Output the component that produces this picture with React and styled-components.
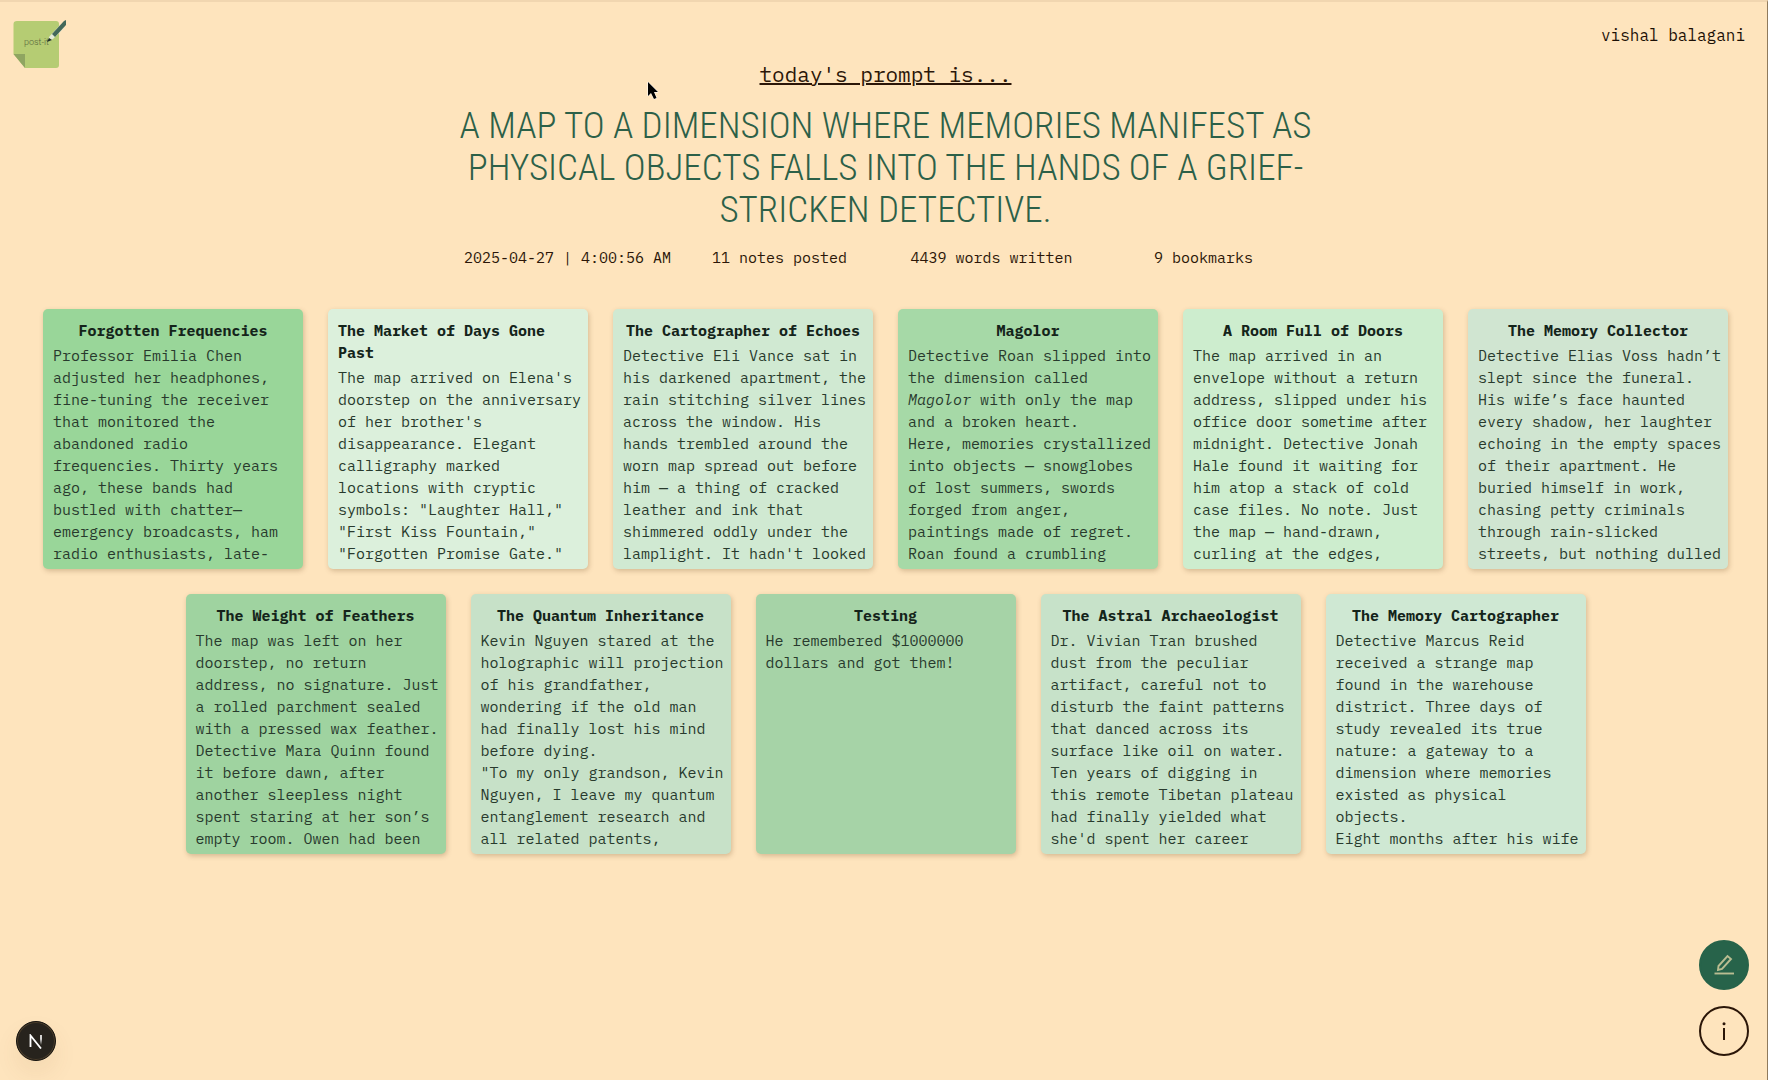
import React from "react";
import styled, { createGlobalStyle } from "styled-components";

const mono = '"IBM Plex Mono", "Liberation Mono", monospace';

const GlobalStyle = createGlobalStyle`
  * { box-sizing: border-box; }
  body { margin: 0; background: #fee4bd; font-family: ${mono}; color: #2b1608; }
  h1, h2, p, ul { margin: 0; padding: 0; font-weight: inherit; }
`;

const Page = styled.div`
  min-height: 100vh;
  padding: 0 0 24px 4px;
  border-top: 2px solid #f1d6b0;
  border-right: 1px solid #8f7a5c;
`;

const TopBar = styled.header`
  display: flex;
  justify-content: space-between;
  align-items: flex-start;
  height: 59px;
  padding: 16px 22px 0 9px;
`;

const LogoLink = styled.a`
  display: block;
  height: 50px;
`;

const UserLink = styled.a`
  font-size: 16px;
  line-height: 34px;
  color: #1c1006;
  text-decoration: none;
`;

const Prompt = styled.section`
  display: flex;
  flex-direction: column;
  align-items: center;
  padding: 0 16px;
`;

const Label = styled.p`
  font-size: 21px;
  line-height: 26px;
  text-decoration: underline;
  text-decoration-thickness: 2px;
`;

const Heading = styled.h1`
  max-width: 880px;
  margin-top: 18px;
  font-family: "Roboto Condensed", Roboto, sans-serif;
  font-size: 37px;
  font-weight: 300;
  line-height: 42px;
  color: #2c6048;
  text-align: center;
  text-transform: uppercase;
`;

const Stats = styled.ul`
  display: grid;
  grid-template-columns: repeat(4, 1fr);
  width: 100%;
  max-width: 848px;
  margin-top: 16px;
  list-style: none;
  text-align: center;
  white-space: nowrap;
  font-size: 15px;
  line-height: 22px;
`;

const Board = styled.main`
  display: flex;
  flex-wrap: wrap;
  justify-content: center;
  gap: 25px;
  padding: 40px 24px 0;
`;

const Note = styled.article`
  display: flex;
  flex-direction: column;
  gap: 3px;
  width: 260px;
  height: 260px;
  padding: 11px 0 4px;
  border-radius: 5px;
  background: ${(p) => p.$tone};
  box-shadow: 1px 2px 5px rgba(90, 60, 20, 0.25);
  font-size: 15px;
  line-height: 22px;
`;

const NoteTitle = styled.h2`
  display: flex;
  flex: none;
  justify-content: center;
  padding: 0 10px;
  font-size: 15px;
  font-weight: 700;
  color: #14241a;
`;

const NoteBody = styled.p`
  flex: 1;
  min-height: 0;
  padding: 0 6px 0 10px;
  overflow: hidden;
  white-space: pre-line;
  color: #283a2d;
`;

const Actions = styled.nav`
  position: fixed;
  right: 19px;
  bottom: 24px;
  display: flex;
  flex-direction: column;
  gap: 16px;
`;

const RoundButton = styled.button`
  display: grid;
  place-items: center;
  width: 50px;
  height: 50px;
  padding: 0;
  border: 2px solid ${(p) => (p.$filled ? "#27634a" : "#2b1608")};
  border-radius: 50%;
  background: ${(p) => (p.$filled ? "#27634a" : "transparent")};
  color: ${(p) => (p.$filled ? "#b9bd91" : "#2b1608")};
`;

const DevButton = styled.button`
  position: fixed;
  left: 16px;
  bottom: 19px;
  display: grid;
  place-items: center;
  width: 40px;
  height: 40px;
  padding: 0;
  border: 1px solid #15120e;
  border-radius: 50%;
  background: #27231d;
  box-shadow: inset 0 0 0 1px #4d3f2c, 0 12px 24px rgba(120, 80, 20, 0.08);
`;

const Pointer = styled.svg`
  position: absolute;
  left: 646px;
  top: 80px;
`;

const notes = [
  { tone: "#99d699", title: "Forgotten Frequencies", body: "Professor Emilia Chen adjusted her headphones, fine-tuning the receiver that monitored the abandoned radio frequencies. Thirty years ago, these bands had bustled with chatter—emergency broadcasts, ham radio enthusiasts, late-" },
  { tone: "#dcf0dc", title: "The Market of Days Gone Past", body: "The map arrived on Elena's doorstep on the anniversary of her brother's disappearance. Elegant calligraphy marked locations with cryptic symbols: \"Laughter Hall,\" \"First Kiss Fountain,\" \"Forgotten Promise Gate.\"" },
  { tone: "#d0e9d2", title: "The Cartographer of Echoes", body: "Detective Eli Vance sat in his darkened apartment, the rain stitching silver lines across the window. His hands trembled around the worn map spread out before him — a thing of cracked leather and ink that shimmered oddly under the lamplight. It hadn't looked" },
  { tone: "#a6d9a7", title: "Magolor", body: <>Detective Roan slipped into the dimension called <em>Magolor</em> with only the map and a broken heart.{"\n"}Here, memories crystallized into objects — snowglobes of lost summers, swords forged from anger, paintings made of regret.{"\n"}Roan found a crumbling</> },
  { tone: "#cdedce", title: "A Room Full of Doors", body: "The map arrived in an envelope without a return address, slipped under his office door sometime after midnight. Detective Jonah Hale found it waiting for him atop a stack of cold case files. No note. Just the map — hand-drawn, curling at the edges," },
  { tone: "#d0e5d1", title: "The Memory Collector", body: "Detective Elias Voss hadn’t slept since the funeral. His wife’s face haunted every shadow, her laughter echoing in the empty spaces of their apartment. He buried himself in work, chasing petty criminals through rain-slicked streets, but nothing dulled" },
  { tone: "#9fd3a0", title: "The Weight of Feathers", body: "The map was left on her doorstep, no return address, no signature. Just a rolled parchment sealed with a pressed wax feather.\nDetective Mara Quinn found it before dawn, after another sleepless night spent staring at her son’s empty room. Owen had been" },
  { tone: "#c7e1c8", title: "The Quantum Inheritance", body: "Kevin Nguyen stared at the holographic will projection of his grandfather, wondering if the old man had finally lost his mind before dying.\n\"To my only grandson, Kevin Nguyen, I leave my quantum entanglement research and all related patents," },
  { tone: "#a6d3a7", title: "Testing", body: "He remembered $1000000 dollars and got them!" },
  { tone: "#c7e2c9", title: "The Astral Archaeologist", body: "Dr. Vivian Tran brushed dust from the peculiar artifact, careful not to disturb the faint patterns that danced across its surface like oil on water. Ten years of digging in this remote Tibetan plateau had finally yielded what she'd spent her career" },
  { tone: "#cfe8d3", title: "The Memory Cartographer", body: "Detective Marcus Reid received a strange map found in the warehouse district. Three days of study revealed its true nature: a gateway to a dimension where memories existed as physical objects.\nEight months after his wife" },
];

const Logo = () => (
  <svg width="56" height="50" viewBox="0 0 56 50" role="img" aria-label="post-it home">
    <path d="M4 3H43Q46 3 46 6V47Q46 50 43 50H12L0.500 36V6Q0.500 3 4 3Z" fill="#b5cc73" />
    <path d="M0.500 36H12V50Z" fill="#8fa561" />
    <text x="11" y="27" fontFamily="Roboto, sans-serif" fontWeight="300" fontSize="9" fill="#56653a">post-it</text>
    <path d="M36 19L47 7L51 10L40 21L36 23Z" fill="#e3ead6" />
    <path d="M39 16L51 3L53 2V7L42 19Z" fill="#43685a" />
    <path d="M36 20L34 24L39 22Z" fill="#1d2d27" />
  </svg>
);

export default function App() {
  return (
    <Page>
      <GlobalStyle />
      <TopBar>
        <LogoLink href="#home"><Logo /></LogoLink>
        <UserLink href="#profile">vishal balagani</UserLink>
      </TopBar>
      <Prompt>
        <Label>today's prompt is...</Label>
        <Heading>A map to a dimension where memories manifest as physical objects falls into the hands of a grief-stricken detective.</Heading>
        <Stats>
          <li>2025-04-27 | 4:00:56 AM</li>
          <li>11 notes posted</li>
          <li>4439 words written</li>
          <li>9 bookmarks</li>
        </Stats>
      </Prompt>
      <Board>
        {notes.map((note) => (
          <Note key={note.title} $tone={note.tone}>
            <NoteTitle>{note.title}</NoteTitle>
            <NoteBody>{note.body}</NoteBody>
          </Note>
        ))}
      </Board>
      <Actions>
        <RoundButton $filled aria-label="Write a note">
          <svg width="22" height="22" viewBox="0 0 22 22" fill="none" stroke="currentColor" strokeWidth="1.9">
            <path d="M5 16L5.500 12L14.500 2L18 5L9 15Z" />
            <path d="M1.500 19.500H21" />
          </svg>
        </RoundButton>
        <RoundButton aria-label="Information">
          <svg width="22" height="22" viewBox="0 0 22 22" fill="none" stroke="currentColor">
            <path d="M11 8V20" strokeWidth="2" />
            <circle cx="11" cy="3.800" r="1.500" fill="currentColor" stroke="none" />
          </svg>
        </RoundButton>
      </Actions>
      <DevButton aria-label="Open developer tools">
        <svg width="14" height="15" viewBox="0 0 14 15" fill="none">
          <defs>
            <linearGradient id="fade" x1="0" y1="0" x2="0" y2="1">
              <stop offset="0.400" stopColor="#fff" />
              <stop offset="1" stopColor="#fff" stopOpacity="0" />
            </linearGradient>
          </defs>
          <path d="M1.500 13V1.500L12 14.500" stroke="#fff" strokeWidth="1.800" />
          <path d="M11.200 1H12.800V11H11.200Z" fill="url(#fade)" />
        </svg>
      </DevButton>
      <Pointer width="18" height="22" viewBox="0 0 18 22" aria-hidden="true">
        <path d="M2 2V16L5 13L8 19L10.500 18L8 12H12Z" fill="#000" stroke="#fff" strokeWidth="1" paintOrder="stroke" />
      </Pointer>
    </Page>
  );
}
